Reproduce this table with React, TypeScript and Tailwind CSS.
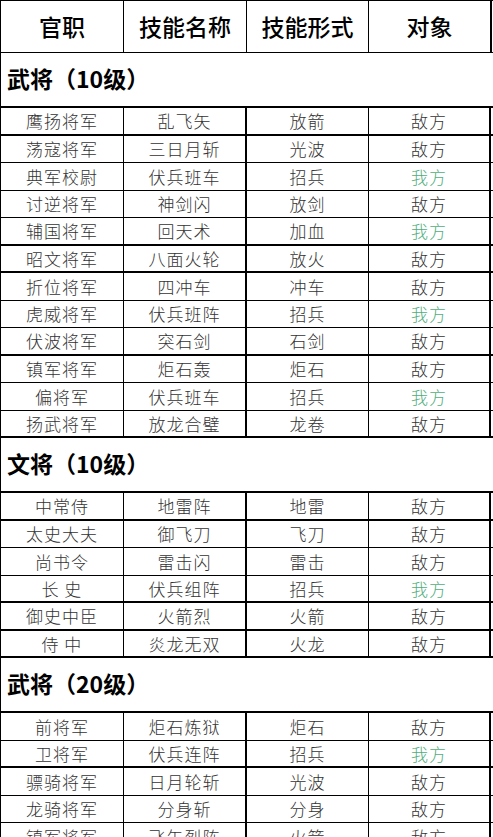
import React from 'react'

type Row = { name: string; skill: string; form: string; target: string; thick?: boolean }

const sections: { title: string; rows: Row[] }[] = [
  {
    title: '武将（10级）',
    rows: [
      { name: '鹰扬将军', skill: '乱飞矢', form: '放箭', target: '敌方', thick: true },
      { name: '荡寇将军', skill: '三日月斩', form: '光波', target: '敌方' },
      { name: '典军校尉', skill: '伏兵班车', form: '招兵', target: '我方' },
      { name: '讨逆将军', skill: '神剑闪', form: '放剑', target: '敌方' },
      { name: '辅国将军', skill: '回天术', form: '加血', target: '我方', thick: true },
      { name: '昭文将军', skill: '八面火轮', form: '放火', target: '敌方', thick: true },
      { name: '折位将军', skill: '四冲车', form: '冲车', target: '敌方' },
      { name: '虎威将军', skill: '伏兵班阵', form: '招兵', target: '我方' },
      { name: '伏波将军', skill: '突石剑', form: '石剑', target: '敌方', thick: true },
      { name: '镇军将军', skill: '炬石轰', form: '炬石', target: '敌方' },
      { name: '偏将军', skill: '伏兵班车', form: '招兵', target: '我方' },
      { name: '扬武将军', skill: '放龙合璧', form: '龙卷', target: '敌方', thick: true },
    ],
  },
  {
    title: '文将（10级）',
    rows: [
      { name: '中常侍', skill: '地雷阵', form: '地雷', target: '敌方', thick: true },
      { name: '太史大夫', skill: '御飞刀', form: '飞刀', target: '敌方' },
      { name: '尚书令', skill: '雷击闪', form: '雷击', target: '敌方' },
      { name: '长 史', skill: '伏兵组阵', form: '招兵', target: '我方', thick: true },
      { name: '御史中臣', skill: '火箭烈', form: '火箭', target: '敌方', thick: true },
      { name: '侍 中', skill: '炎龙无双', form: '火龙', target: '敌方', thick: true },
    ],
  },
  {
    title: '武将（20级）',
    rows: [
      { name: '前将军', skill: '炬石炼狱', form: '炬石', target: '敌方' },
      { name: '卫将军', skill: '伏兵连阵', form: '招兵', target: '我方', thick: true },
      { name: '骠骑将军', skill: '日月轮斩', form: '光波', target: '敌方' },
      { name: '龙骑将军', skill: '分身斩', form: '分身', target: '敌方' },
      { name: '镇军将军', skill: '飞矢烈阵', form: '火箭', target: '敌方' },
    ],
  },
]

const font = { fontFamily: '"Noto Sans CJK SC", "Noto Sans", sans-serif' }

function DataRow({ row }: { row: Row }) {
  const cell = 'flex items-center justify-center text-[17px] tracking-[1px] font-light'
  return (
    <div
      className={`flex h-[27.5px] border-l border-black text-[#333] ${row.thick ? 'border-b-2' : 'border-b'} border-b-black`}
    >
      <div className={`${cell} w-[123px] border-r border-black`}>{row.name}</div>
      <div className={`${cell} w-[123px] border-r-2 border-black`}>{row.skill}</div>
      <div className={`${cell} w-[122px] border-r border-black`}>{row.form}</div>
      <div
        className={`${cell} w-[122px] border-r-2 border-black ${row.target === '我方' ? 'text-[#4fae7c]' : 'text-[#333]'}`}
      >
        {row.target}
      </div>
    </div>
  )
}

export default function App() {
  return (
    <div className="w-[493px] h-[837px] overflow-hidden bg-white" style={font}>
      <div className="flex h-[53px] border-t border-l border-b border-black text-[23px] font-medium text-black">
        <div className="w-[123px] flex items-center justify-center border-r border-black">官职</div>
        <div className="w-[123px] flex items-center justify-center border-r border-black">技能名称</div>
        <div className="w-[122px] flex items-center justify-center border-r border-black">技能形式</div>
        <div className="w-[123px] flex items-center justify-center border-r-2 border-black">对象</div>
      </div>
      {sections.map((s) => (
        <div key={s.title}>
          <div className="h-[55px] border-l border-black border-b-2 border-b-black flex items-center pl-[6px] pb-[3px] text-[23px] font-bold text-black">
            {s.title}
          </div>
          {s.rows.map((r, i) => (
            <DataRow key={i} row={r} />
          ))}
        </div>
      ))}
    </div>
  )
}
